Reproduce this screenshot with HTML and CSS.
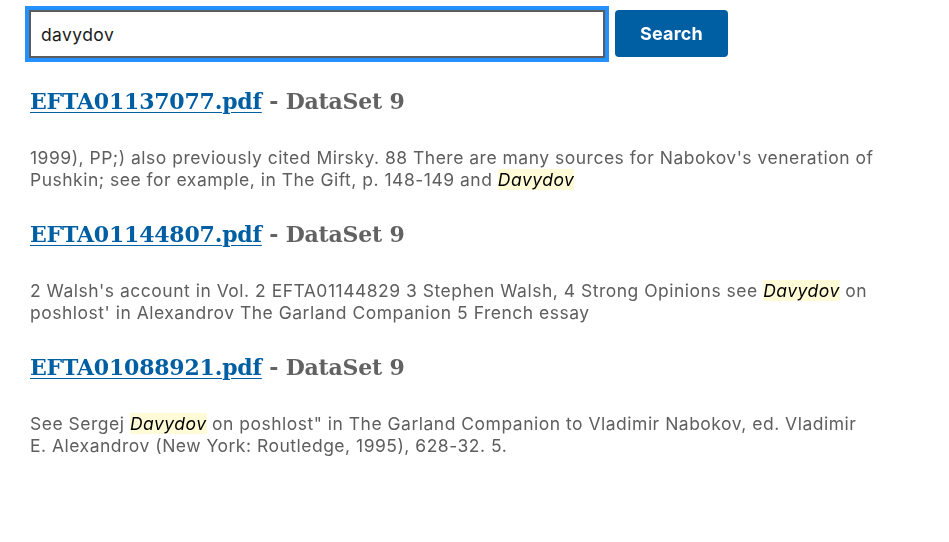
FILE: index.html
```html
<!DOCTYPE html>
<html lang="en">
<head>
<meta charset="utf-8">
<title>Search</title>
<link rel="stylesheet" href="styles.css">
</head>
<body>
<main class="page">
  <form class="search">
    <input class="search-input" type="text" value="davydov" autofocus>
    <button class="search-btn" type="button">Search</button>
  </form>
  <section class="results">
    <article class="result">
      <h2 class="result-title"><a href="#">EFTA01137077.pdf</a> - DataSet 9</h2>
      <p class="snippet">1999), PP;) also previously cited Mirsky. 88 There are many sources for Nabokov's veneration of Pushkin; see for example, in The Gift, p. 148-149 and <mark>Davydov</mark></p>
    </article>
    <article class="result">
      <h2 class="result-title"><a href="#">EFTA01144807.pdf</a> - DataSet 9</h2>
      <p class="snippet">2 Walsh's account in Vol. 2 EFTA01144829 3 Stephen Walsh, 4 Strong Opinions see <mark>Davydov</mark> on poshlost' in Alexandrov The Garland Companion 5 French essay</p>
    </article>
    <article class="result">
      <h2 class="result-title"><a href="#">EFTA01088921.pdf</a> - DataSet 9</h2>
      <p class="snippet">See Sergej <mark>Davydov</mark> on poshlost" in The Garland Companion to Vladimir Nabokov, ed. Vladimir E. Alexandrov (New York: Routledge, 1995), 628-32. 5.</p>
    </article>
  </section>
</main>
</body>
</html>
```
FILE: styles.css
```css
html, body {
  margin: 0;
  padding: 0;
  background: #ffffff;
}
body {
  font-family: "Inter", "Liberation Sans", sans-serif;
  color: #5e5e5e;
}
.page {
  padding: 10px 0 0 30px;
  width: 846px;
}
.search {
  display: flex;
  gap: 10px;
  margin: 0 0 28px -1px;
}
.search-input {
  box-sizing: border-box;
  width: 576px;
  height: 48px;
  margin: 0;
  padding: 0 10px;
  border: 2px solid #5c5c5c;
  border-radius: 0;
  outline: 4px solid #2491ff;
  outline-offset: 0;
  font-family: "Inter", "Liberation Sans", sans-serif;
  font-size: 17.5px;
  letter-spacing: 0.4px;
  color: #1b1b1b;
  caret-color: #1b1b1b;
}
.search-btn {
  box-sizing: border-box;
  width: 113px;
  height: 47px;
  margin: 0;
  border: 0;
  border-radius: 4px;
  background: #005ea2;
  color: #ffffff;
  font-family: "Inter", "Liberation Sans", sans-serif;
  font-weight: 700;
  font-size: 18px;
  letter-spacing: 0.2px;
}
.result {
  margin-bottom: 28px;
}
.result-title {
  margin: 0 0 31px;
  font-family: "DejaVu Serif", "Liberation Serif", serif;
  font-weight: 700;
  font-size: 22px;
  line-height: 30px;
  letter-spacing: -0.2px;
  color: #626262;
}
.result-title a {
  color: #005ea2;
  text-decoration: underline;
  text-decoration-thickness: 1px;
  text-underline-offset: 3px;
}
.snippet {
  margin: 0;
  font-size: 17.5px;
  letter-spacing: 0.5px;
  line-height: 22px;
}
.snippet mark {
  background: #fffbd6;
  color: #000000;
  font-style: italic;
}
```
